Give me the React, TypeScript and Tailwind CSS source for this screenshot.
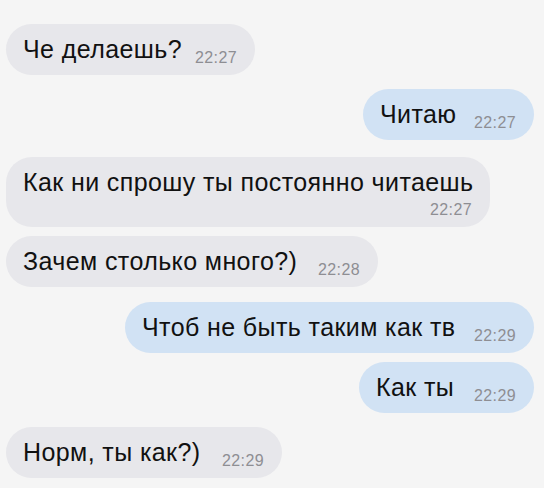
import React from "react";

const font = { fontFamily: '"Liberation Sans", Arial, sans-serif' };

function Time({ t }: { t: string }) {
  return (
    <span className="text-[16px] leading-[16px] tracking-[0.4px] text-[#8e8e93] translate-y-[5px] shrink-0">
      {t}
    </span>
  );
}

function Bubble({
  text,
  time,
  mine,
  width,
  className,
}: {
  text: string;
  time: string;
  mine?: boolean;
  width: string;
  className: string;
}) {
  return (
    <div
      className={`${width} ${className} ${
        mine ? "self-end mr-[10px] bg-[#d1e2f4]" : "self-start ml-[6px] bg-[#e7e7eb]"
      } h-[51px] rounded-full flex items-baseline justify-between pl-[17px] pr-[18px] pt-[13px]`}
    >
      <span className="text-[25px] leading-[24px] tracking-[0.4px] text-[#111] whitespace-nowrap">{text}</span>
      <Time t={time} />
    </div>
  );
}

export default function App() {
  return (
    <div className="w-[544px] h-[488px] bg-[#f5f5f5] flex flex-col pt-[24px] overflow-hidden" style={font}>
      <Bubble text="Че делаешь?" time="22:27" width="w-[249px]" className="" />
      <Bubble text="Читаю" time="22:27" mine width="w-[171px]" className="mt-[14px]" />

      <div className="self-start ml-[6px] mt-[17px] w-[484px] h-[70px] rounded-[26px] bg-[#e7e7eb] flex flex-col pl-[17px] pr-[18px] pt-[13px]">
        <span className="text-[25px] leading-[24px] tracking-[0.4px] text-[#111] whitespace-nowrap">
          Как ни спрошу ты постоянно читаешь
        </span>
        <span className="self-end mt-[8px] text-[16px] leading-[16px] tracking-[0.4px] text-[#8e8e93]">
          22:27
        </span>
      </div>

      <Bubble text="Зачем столько много?)" time="22:28" width="w-[372px]" className="mt-[9px]" />
      <Bubble text="Чтоб не быть таким как тв" time="22:29" mine width="w-[409px]" className="mt-[15px]" />
      <Bubble text="Как ты" time="22:29" mine width="w-[175px]" className="mt-[9px]" />
      <Bubble text="Норм, ты как?)" time="22:29" width="w-[276px]" className="mt-[14px]" />
    </div>
  );
}
